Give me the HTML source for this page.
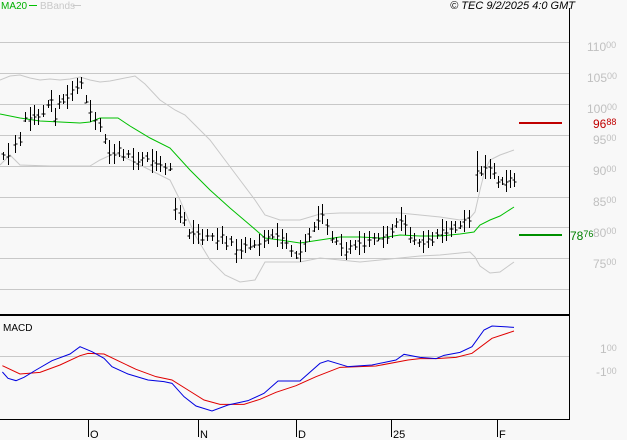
<!DOCTYPE html>
<html><head><meta charset="utf-8"><style>
html,body{margin:0;padding:0;background:#f8f8f8;}
svg{display:block;font-family:"Liberation Sans",sans-serif;}
</style></head><body>
<svg id="s" width="627" height="440" xmlns="http://www.w3.org/2000/svg">
<rect width="627" height="440" fill="#f8f8f8"/>
<g stroke="#c8c8c8" stroke-width="1">
<line x1="0" y1="42.5" x2="569" y2="42.5"/><line x1="0" y1="73.5" x2="569" y2="73.5"/>
<line x1="0" y1="104.5" x2="569" y2="104.5"/><line x1="0" y1="135.5" x2="569" y2="135.5"/>
<line x1="0" y1="166.5" x2="569" y2="166.5"/><line x1="0" y1="197.5" x2="569" y2="197.5"/>
<line x1="0" y1="227.5" x2="569" y2="227.5"/><line x1="0" y1="258.5" x2="569" y2="258.5"/>
<line x1="0" y1="289.5" x2="569" y2="289.5"/><line x1="0" y1="356.5" x2="569" y2="356.5"/>
</g>
<line x1="569.5" y1="8" x2="569.5" y2="420" stroke="#000"/>
<line x1="0" y1="315" x2="570" y2="315" stroke="#000" stroke-width="2"/>
<line x1="0" y1="419.5" x2="570" y2="419.5" stroke="#000"/>
<g stroke="#000"><line x1="88.5" y1="420" x2="88.5" y2="437"/><line x1="198.5" y1="420" x2="198.5" y2="437"/><line x1="296.5" y1="420" x2="296.5" y2="437"/><line x1="391.5" y1="420" x2="391.5" y2="437"/><line x1="497.5" y1="420" x2="497.5" y2="437"/></g>
<g font-size="11" fill="#000"><text x="90" y="438">O</text><text x="200" y="438">N</text><text x="298" y="438">D</text><text x="393" y="438">25</text><text x="499" y="438">F</text></g>
<text x="1" y="9" font-size="10" fill="#00b000">MA20</text><line x1="29" y1="5.5" x2="37" y2="5.5" stroke="#00c000"/>
<text x="40" y="9" font-size="10" fill="#c8c8c8">BBands</text><line x1="73" y1="5.5" x2="81" y2="5.5" stroke="#c8c8c8"/>
<text x="575" y="9" font-size="11" font-style="italic" text-anchor="end" fill="#000">© TEC 9/2/2025 4:0 GMT</text>
<text x="3" y="331" font-size="10" fill="#000">MACD</text>
<g fill="#c0c0c0" font-size="12">
<text x="587" y="51">110<tspan font-size="9" dy="-3">00</tspan></text>
<text x="587" y="82">105<tspan font-size="9" dy="-3">00</tspan></text>
<text x="587" y="113">100<tspan font-size="9" dy="-3">00</tspan></text>
<text x="593" y="144">95<tspan font-size="9" dy="-3">00</tspan></text>
<text x="593" y="175">90<tspan font-size="9" dy="-3">00</tspan></text>
<text x="593" y="206">85<tspan font-size="9" dy="-3">00</tspan></text>
<text x="593" y="237">80<tspan font-size="9" dy="-3">00</tspan></text>
<text x="593" y="268">75<tspan font-size="9" dy="-3">00</tspan></text>
<text x="600" y="353">1<tspan font-size="9" dy="-2">00</tspan></text>
<text x="596" y="376">-1<tspan font-size="9" dy="-2">00</tspan></text>
</g>
<text x="593" y="128" font-size="12" fill="#c00000">96<tspan font-size="9" dy="-3">88</tspan></text>
<text x="570" y="240" font-size="12" fill="#008000">78<tspan font-size="9" dy="-3">76</tspan></text>
<line x1="519" y1="123" x2="562" y2="123" stroke="#c00000" stroke-width="2"/>
<line x1="519" y1="235" x2="562" y2="235" stroke="#009000" stroke-width="2"/>
<g id="lines" fill="none"></g>
<g id="bars" stroke="#000" stroke-width="1"></g>
</svg>
<script>
var NS="http://www.w3.org/2000/svg";
function pl(pts,col,w){var p=document.createElementNS(NS,"polyline");p.setAttribute("points",pts.map(function(a){return a[0]+","+a[1]}).join(" "));p.setAttribute("stroke",col);p.setAttribute("stroke-width",w||1);p.setAttribute("fill","none");document.getElementById("lines").appendChild(p);}
var up=[[0,80],[10,76],[20,75],[30,78],[40,80],[50,79],[60,80],[70,79],[80,77],[90,80],[100,82],[110,81],[120,79],[135,76],[145,84],[160,100],[175,110],[185,115],[195,125],[210,140],[225,160],[240,180],[255,200],[265,215],[280,220],[300,220],[320,214],[340,213],[380,213],[400,213],[420,215],[440,217],[460,220],[470,218],[475,212],[480,190],[485,170],[490,160],[500,155],[514,150]];
var lo=[[0,165],[10,155],[20,165],[50,166],[90,166],[100,160],[115,153],[130,160],[150,170],[170,180],[180,200],[195,235],[210,260],[225,275],[240,282],[255,280],[265,262],[280,262],[300,262],[320,258],[340,260],[360,262],[380,260],[400,258],[420,256],[440,255],[460,253],[470,252],[475,257],[480,266],[490,273],[500,272],[514,262]];
var ma=[[0,114],[20,118],[40,121],[60,122],[80,123],[90,122],[100,118],[118,118],[130,126],[150,138],[170,148],[190,170],[210,190],[230,208],[250,225],[265,238],[280,240],[300,243],[320,240],[340,237],[360,237],[380,238],[400,235],[420,236],[440,236],[460,234],[474,232],[480,225],[490,220],[500,216],[514,207]];
pl(up,"#c8c8c8");pl(lo,"#c8c8c8");pl(ma,"#00c000");
function m(a){return a.map(function(p){return [p[0]/2.5,300+p[1]/3]});}
pl(m([[6,197],[50,222],[100,217],[150,195],[200,167],[220,160],[260,162],[300,185],[340,208],[390,230],[430,240],[470,270],[510,300],[550,313],[610,313],[650,298],[690,277],[740,257],[790,230],[850,202],[940,198],[1020,180],[1050,176],[1090,176],[1140,172],[1180,160],[1230,115],[1285,93]]),"#e00000");
pl(m([[6,216],[20,235],[40,242],[60,232],[90,210],[130,182],[175,162],[200,140],[230,155],[260,175],[280,200],[320,222],[370,240],[410,245],[430,250],[460,290],[490,318],[530,333],[570,315],[620,302],[660,280],[695,243],[750,243],[800,190],[820,182],[870,200],[930,195],[990,180],[1010,163],[1050,172],[1090,176],[1110,166],[1150,157],[1180,140],[1210,90],[1230,78],[1285,82]]),"#0000e0");
var c=[[3,157],[8,155],[15,145],[20,140],[25,118],[30,120],[34,116],[38,118],[43,112],[48,105],[51,102],[55,118],[59,103],[63,100],[67,98],[72,92],[77,87],[81,84],[86,100],[90,112],[95,122],[100,126],[105,140],[109,153],[114,155],[119,150],[123,156],[128,155],[133,160],[138,162],[142,160],[147,158],[152,162],[156,162],[160,165],[165,170],[170,168],[175,210],[180,215],[184,220],[189,235],[193,233],[198,235],[202,238],[207,236],[212,238],[217,240],[222,236],[226,244],[231,242],[236,252],[241,250],[245,246],[250,245],[254,245],[259,246],[264,240],[268,238],[272,235],[277,236],[282,240],[286,242],[291,252],[296,256],[300,252],[305,244],[309,236],[314,228],[318,219],[322,215],[327,228],[332,238],[336,242],[341,246],[346,252],[350,248],[355,246],[359,244],[364,244],[369,240],[374,240],[378,238],[383,238],[387,236],[392,232],[396,224],[401,220],[405,226],[410,236],[414,240],[419,244],[423,243],[428,240],[432,240],[437,235],[442,232],[446,232],[451,230],[455,228],[460,226],[464,222],[469,220],[477,172],[481,172],[485,168],[490,170],[494,172],[498,183],[502,182],[506,182],[510,180],[514,181]];
var g=document.getElementById("bars"),s="";
c.forEach(function(p,i){var h=5+((i*7)%9);var x=p[0]+.5;var hi=p[1]-h,lw=p[1]+h-2;if(i==c.length-10){hi=151;lw=192;}
var o=p[1]+((i*5)%7)-3,cl=p[1]+((i*3)%5)-2;
s+='<line x1="'+x+'" y1="'+hi+'" x2="'+x+'" y2="'+lw+'"/><line x1="'+(x-2)+'" y1="'+o+'" x2="'+x+'" y2="'+o+'"/><line x1="'+x+'" y1="'+cl+'" x2="'+(x+2)+'" y2="'+cl+'"/>';});
g.innerHTML=s;
</script>
</body></html>
